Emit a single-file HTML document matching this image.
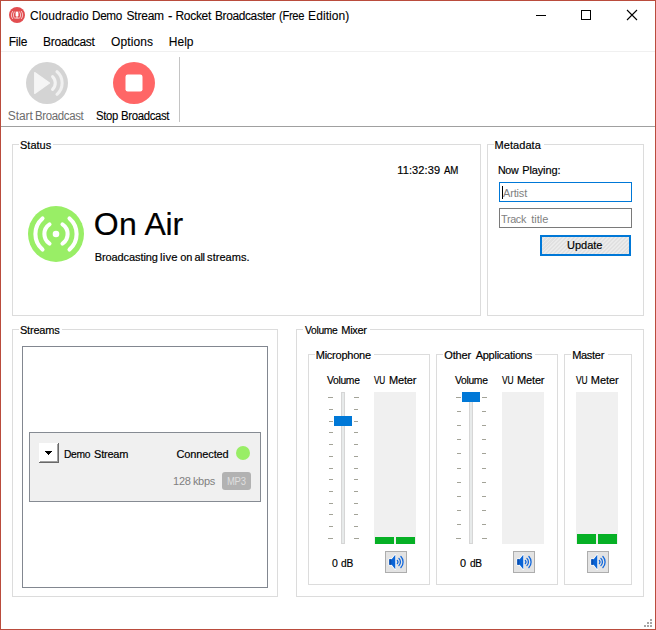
<!DOCTYPE html>
<html><head><meta charset="utf-8"><title>Rocket Broadcaster</title>
<style>
html,body{margin:0;padding:0;background:#fff;}
body{width:656px;height:630px;position:relative;overflow:hidden;font-family:"Liberation Sans", sans-serif;}
.p{position:absolute;left:0;margin:0;padding:0;white-space:pre;font-family:"Liberation Sans", sans-serif;}
.t{position:relative;display:inline-block;white-space:pre;}
.b{position:absolute;box-sizing:border-box;}
.gb{position:absolute;box-sizing:border-box;border:1px solid #dcdcdc;}
.lb{position:absolute;background:#fff;height:3px;}
svg{position:absolute;overflow:visible;}
</style></head><body>
<!-- window border -->
<div class="b" style="left:0;top:0;width:656px;height:630px;border:1px solid #ba4c3d;"></div>
<!-- title icon -->
<svg style="left:9px;top:7px" width="16" height="16" viewBox="0 0 16 16">
 <circle cx="8" cy="8" r="8" fill="#e24d50"/>
 <rect x="6.6" y="4.5" width="2.8" height="5.2" rx="1.4" fill="#fff"/>
 <rect x="6.3" y="10.6" width="3.4" height="0.9" fill="#fff" opacity="0.95"/>
 <rect x="7.6" y="9.6" width="0.8" height="1.2" fill="#fff" opacity="0.9"/>
 <g fill="none" stroke="#fff" stroke-width="0.9" opacity="0.75">
  <path d="M5.9 4.4A5 5 0 0 0 5.9 11.6M10.1 4.4A5 5 0 0 1 10.1 11.6"/>
  <path d="M3.9 4A6.5 6.5 0 0 0 3.9 12M12.1 4A6.5 6.5 0 0 1 12.1 12"/>
 </g>
</svg>
<!-- window controls -->
<svg style="left:530px;top:5px" width="120" height="20" viewBox="530 5 120 20" shape-rendering="crispEdges">
 <rect x="536" y="15" width="10" height="1" fill="#000"/>
 <rect x="581.5" y="10.5" width="9" height="9" fill="none" stroke="#000" stroke-width="1"/>
</svg>
<svg style="left:627px;top:10px" width="10" height="10" viewBox="0 0 10 10">
 <path d="M0 0L10 10M10 0L0 10" stroke="#000" stroke-width="1.1" fill="none"/>
</svg>
<!-- menu separator -->
<div class="b" style="left:1px;top:51px;width:654px;height:1px;background:#f0f0f0;"></div>
<!-- toolbar bottom line -->
<div class="b" style="left:1px;top:126px;width:654px;height:1px;background:#a0a0a0;"></div>
<!-- toolbar separator -->
<div class="b" style="left:179px;top:57px;width:1px;height:65px;background:#c4c4c4;"></div>
<!-- start broadcast icon -->
<svg style="left:26px;top:62px" width="42" height="42" viewBox="0 0 42 42">
 <circle cx="21" cy="21" r="21" fill="#d4d4d4"/>
 <path d="M8.7 10.6L23.5 21L8.7 31.4Z" fill="#f5f5f5" stroke="#f5f5f5" stroke-width="1.2" stroke-linejoin="round"/>
 <path d="M26.6 14.6a9 9 0 0 1 0 12.8" fill="none" stroke="#f3f3f3" stroke-width="3.1" stroke-linecap="round"/>
 <path d="M31 9.7a15 15 0 0 1 0 22.6" fill="none" stroke="#f1f1f1" stroke-width="3.1" stroke-linecap="round"/>
</svg>
<!-- stop broadcast icon -->
<svg style="left:113px;top:62px" width="42" height="42" viewBox="0 0 42 42">
 <circle cx="21" cy="21" r="21" fill="#ff6666"/>
 <rect x="12.5" y="12.5" width="17" height="17" rx="2.2" fill="#fff"/>
</svg>

<!-- group boxes -->
<div class="gb" style="left:12px;top:144px;width:469px;height:172px;"></div>
<div class="lb" style="left:19px;top:143px;width:34px;"></div>
<div class="gb" style="left:487px;top:144px;width:157px;height:172px;"></div>
<div class="lb" style="left:494px;top:143px;width:50px;"></div>
<div class="gb" style="left:12px;top:329px;width:266px;height:268px;"></div>
<div class="lb" style="left:19px;top:328px;width:43px;"></div>
<div class="gb" style="left:296px;top:329px;width:348px;height:268px;"></div>
<div class="lb" style="left:303px;top:328px;width:67px;"></div>
<div class="gb" style="left:308px;top:354px;width:122px;height:231px;"></div>
<div class="lb" style="left:315px;top:353px;width:59px;"></div>
<div class="gb" style="left:436px;top:354px;width:122px;height:231px;"></div>
<div class="lb" style="left:443px;top:353px;width:92px;"></div>
<div class="gb" style="left:564px;top:354px;width:68px;height:231px;"></div>
<div class="lb" style="left:571px;top:353px;width:37px;"></div>

<!-- On air icon -->
<svg style="left:28px;top:206px" width="56" height="56" viewBox="-28 -28 56 56">
 <circle cx="0" cy="0" r="28" fill="#99ee66"/>
 <circle cx="0" cy="0" r="3.3" fill="#fff"/>
 <g fill="none" stroke="#fff" stroke-width="4.1" stroke-linecap="round">
  <path d="M-6.49 -9.62A11.6 11.6 0 0 0 -6.49 9.62"/>
  <path d="M6.49 -9.62A11.6 11.6 0 0 1 6.49 9.62"/>
  <path d="M-13.51 -15.55A20.6 20.6 0 0 0 -13.51 15.55"/>
  <path d="M13.51 -15.55A20.6 20.6 0 0 1 13.51 15.55"/>
 </g>
</svg>

<!-- metadata inputs -->
<div class="b" style="left:499px;top:182px;width:133px;height:20px;border:1px solid #0078d7;background:#fff;"></div>
<div class="b" style="left:502px;top:186px;width:1px;height:13px;background:#000;"></div>
<div class="b" style="left:499px;top:208px;width:133px;height:20px;border:1px solid #7a7a7a;background:#fff;"></div>
<div class="b" style="left:540px;top:235px;width:91px;height:21px;border:2px solid #0078d7;background:#e1e1e1 repeating-linear-gradient(135deg,rgba(255,255,255,0) 0,rgba(255,255,255,0) 1.5px,rgba(255,255,255,.35) 1.5px,rgba(255,255,255,.35) 2.8px);"></div>

<!-- streams list -->
<div class="b" style="left:22px;top:346px;width:246px;height:242px;border:1px solid #828790;background:#fff;"></div>
<div class="b" style="left:29px;top:432px;width:232px;height:70px;border:1px solid #868b93;background:#f0f0f0;"></div>
<!-- dropdown button -->
<div class="b" style="left:39px;top:443px;width:20px;height:20px;background:#fff;border-right:1px solid #696969;border-bottom:1px solid #696969;"></div>
<div class="b" style="left:40px;top:444px;width:18px;height:18px;border-right:1px solid #a0a0a0;border-bottom:1px solid #a0a0a0;"></div>
<svg style="left:45px;top:451px" width="7" height="4" viewBox="0 0 7 4" shape-rendering="crispEdges"><path d="M0 0H7V1H6V2H5V3H4V4H3V3H2V2H1V1H0Z" fill="#000"/></svg>
<!-- connected dot -->
<div class="b" style="left:236px;top:446px;width:14px;height:14px;border-radius:7px;background:#99ee66;"></div>
<!-- mp3 badge -->
<div class="b" style="left:222px;top:472px;width:29px;height:18px;border-radius:3px;background:#b2b2b2;"></div>
<!-- mixer -->
<div class="b" style="left:341px;top:392px;width:4px;height:152px;border:1px solid #d6d6d6;background:#e7eaea;"></div>
<div class="b" style="left:328px;top:397px;width:5px;height:1px;background:#a3a398;"></div>
<div class="b" style="left:354px;top:397px;width:5px;height:1px;background:#a3a398;"></div>
<div class="b" style="left:329px;top:409px;width:4px;height:1px;background:#a3a398;"></div>
<div class="b" style="left:354px;top:409px;width:4px;height:1px;background:#a3a398;"></div>
<div class="b" style="left:329px;top:421px;width:4px;height:1px;background:#a3a398;"></div>
<div class="b" style="left:354px;top:421px;width:4px;height:1px;background:#a3a398;"></div>
<div class="b" style="left:329px;top:432px;width:4px;height:1px;background:#a3a398;"></div>
<div class="b" style="left:354px;top:432px;width:4px;height:1px;background:#a3a398;"></div>
<div class="b" style="left:329px;top:444px;width:4px;height:1px;background:#a3a398;"></div>
<div class="b" style="left:354px;top:444px;width:4px;height:1px;background:#a3a398;"></div>
<div class="b" style="left:329px;top:456px;width:4px;height:1px;background:#a3a398;"></div>
<div class="b" style="left:354px;top:456px;width:4px;height:1px;background:#a3a398;"></div>
<div class="b" style="left:329px;top:468px;width:4px;height:1px;background:#a3a398;"></div>
<div class="b" style="left:354px;top:468px;width:4px;height:1px;background:#a3a398;"></div>
<div class="b" style="left:329px;top:479px;width:4px;height:1px;background:#a3a398;"></div>
<div class="b" style="left:354px;top:479px;width:4px;height:1px;background:#a3a398;"></div>
<div class="b" style="left:329px;top:491px;width:4px;height:1px;background:#a3a398;"></div>
<div class="b" style="left:354px;top:491px;width:4px;height:1px;background:#a3a398;"></div>
<div class="b" style="left:329px;top:503px;width:4px;height:1px;background:#a3a398;"></div>
<div class="b" style="left:354px;top:503px;width:4px;height:1px;background:#a3a398;"></div>
<div class="b" style="left:329px;top:514px;width:4px;height:1px;background:#a3a398;"></div>
<div class="b" style="left:354px;top:514px;width:4px;height:1px;background:#a3a398;"></div>
<div class="b" style="left:329px;top:526px;width:4px;height:1px;background:#a3a398;"></div>
<div class="b" style="left:354px;top:526px;width:4px;height:1px;background:#a3a398;"></div>
<div class="b" style="left:328px;top:538px;width:5px;height:1px;background:#a3a398;"></div>
<div class="b" style="left:354px;top:538px;width:5px;height:1px;background:#a3a398;"></div>
<div class="b" style="left:334px;top:416px;width:18px;height:10px;background:#0078d7;"></div>
<div class="b" style="left:374px;top:392px;width:42px;height:152px;background:#f0f0f0;"></div>
<div class="b" style="left:375px;top:537px;width:19px;height:7px;background:#06b025;"></div>
<div class="b" style="left:396px;top:537px;width:19px;height:7px;background:#06b025;"></div>
<div class="b" style="left:385px;top:551px;width:22px;height:22px;border:1px solid #adadad;background:#e3e3e3;"></div>
<svg style="left:385px;top:551px" width="22" height="22" viewBox="0 0 22 22">
 <g transform="translate(0.7 0)"><path d="M3.6 8.2H6L9.6 3.8V18.2L6 13.8H3.6Z" fill="#0a64d6" stroke="#fff" stroke-width="1.6" stroke-linejoin="round" paint-order="stroke"/>
 <rect x="3.6" y="8.2" width="2" height="5.6" fill="#0a4fb0"/>
 <g fill="none" stroke="#1268dc" stroke-width="1.3" stroke-linecap="round">
  <path d="M11.7 9.5a2.2 2.2 0 0 1 0 3"/>
  <path d="M13.2 7.4a5 5 0 0 1 0 7.2"/>
  <path d="M15.2 5.5a8 8 0 0 1 0 11"/>
 </g></g>
</svg>
<div class="b" style="left:469px;top:392px;width:4px;height:152px;border:1px solid #d6d6d6;background:#e7eaea;"></div>
<div class="b" style="left:456px;top:397px;width:5px;height:1px;background:#a3a398;"></div>
<div class="b" style="left:482px;top:397px;width:5px;height:1px;background:#a3a398;"></div>
<div class="b" style="left:457px;top:411px;width:4px;height:1px;background:#a3a398;"></div>
<div class="b" style="left:482px;top:411px;width:4px;height:1px;background:#a3a398;"></div>
<div class="b" style="left:457px;top:425px;width:4px;height:1px;background:#a3a398;"></div>
<div class="b" style="left:482px;top:425px;width:4px;height:1px;background:#a3a398;"></div>
<div class="b" style="left:457px;top:439px;width:4px;height:1px;background:#a3a398;"></div>
<div class="b" style="left:482px;top:439px;width:4px;height:1px;background:#a3a398;"></div>
<div class="b" style="left:457px;top:453px;width:4px;height:1px;background:#a3a398;"></div>
<div class="b" style="left:482px;top:453px;width:4px;height:1px;background:#a3a398;"></div>
<div class="b" style="left:457px;top:468px;width:4px;height:1px;background:#a3a398;"></div>
<div class="b" style="left:482px;top:468px;width:4px;height:1px;background:#a3a398;"></div>
<div class="b" style="left:457px;top:482px;width:4px;height:1px;background:#a3a398;"></div>
<div class="b" style="left:482px;top:482px;width:4px;height:1px;background:#a3a398;"></div>
<div class="b" style="left:457px;top:496px;width:4px;height:1px;background:#a3a398;"></div>
<div class="b" style="left:482px;top:496px;width:4px;height:1px;background:#a3a398;"></div>
<div class="b" style="left:457px;top:510px;width:4px;height:1px;background:#a3a398;"></div>
<div class="b" style="left:482px;top:510px;width:4px;height:1px;background:#a3a398;"></div>
<div class="b" style="left:457px;top:524px;width:4px;height:1px;background:#a3a398;"></div>
<div class="b" style="left:482px;top:524px;width:4px;height:1px;background:#a3a398;"></div>
<div class="b" style="left:456px;top:538px;width:5px;height:1px;background:#a3a398;"></div>
<div class="b" style="left:482px;top:538px;width:5px;height:1px;background:#a3a398;"></div>
<div class="b" style="left:462px;top:392px;width:18px;height:10px;background:#0078d7;"></div>
<div class="b" style="left:502px;top:392px;width:42px;height:152px;background:#f0f0f0;"></div>
<div class="b" style="left:513px;top:551px;width:22px;height:22px;border:1px solid #adadad;background:#e3e3e3;"></div>
<svg style="left:513px;top:551px" width="22" height="22" viewBox="0 0 22 22">
 <g transform="translate(0.7 0)"><path d="M3.6 8.2H6L9.6 3.8V18.2L6 13.8H3.6Z" fill="#0a64d6" stroke="#fff" stroke-width="1.6" stroke-linejoin="round" paint-order="stroke"/>
 <rect x="3.6" y="8.2" width="2" height="5.6" fill="#0a4fb0"/>
 <g fill="none" stroke="#1268dc" stroke-width="1.3" stroke-linecap="round">
  <path d="M11.7 9.5a2.2 2.2 0 0 1 0 3"/>
  <path d="M13.2 7.4a5 5 0 0 1 0 7.2"/>
  <path d="M15.2 5.5a8 8 0 0 1 0 11"/>
 </g></g>
</svg>
<div class="b" style="left:576px;top:392px;width:42px;height:152px;background:#f0f0f0;"></div>
<div class="b" style="left:577px;top:534px;width:19px;height:10px;background:#06b025;"></div>
<div class="b" style="left:598px;top:534px;width:19px;height:10px;background:#06b025;"></div>
<div class="b" style="left:587px;top:551px;width:22px;height:22px;border:1px solid #adadad;background:#e3e3e3;"></div>
<svg style="left:587px;top:551px" width="22" height="22" viewBox="0 0 22 22">
 <g transform="translate(0.7 0)"><path d="M3.6 8.2H6L9.6 3.8V18.2L6 13.8H3.6Z" fill="#0a64d6" stroke="#fff" stroke-width="1.6" stroke-linejoin="round" paint-order="stroke"/>
 <rect x="3.6" y="8.2" width="2" height="5.6" fill="#0a4fb0"/>
 <g fill="none" stroke="#1268dc" stroke-width="1.3" stroke-linecap="round">
  <path d="M11.7 9.5a2.2 2.2 0 0 1 0 3"/>
  <path d="M13.2 7.4a5 5 0 0 1 0 7.2"/>
  <path d="M15.2 5.5a8 8 0 0 1 0 11"/>
 </g></g>
</svg>
<!-- grip -->
<div class="b" style="left:650px;top:619px;width:2px;height:2px;background:#a6a6a6;"></div>
<div class="b" style="left:647px;top:622px;width:2px;height:2px;background:#a6a6a6;"></div>
<div class="b" style="left:650px;top:622px;width:2px;height:2px;background:#a6a6a6;"></div>
<div class="b" style="left:644px;top:625px;width:2px;height:2px;background:#a6a6a6;"></div>
<div class="b" style="left:647px;top:625px;width:2px;height:2px;background:#a6a6a6;"></div>
<div class="b" style="left:650px;top:625px;width:2px;height:2px;background:#a6a6a6;"></div>

<div class="p" style="top:9.84px;font-size:12px;line-height:12px;color:#000;"><span class="t" id="w0" style="left:29.96px;letter-spacing:0.081px;-webkit-text-stroke:0.1px #000;">Cloudradio</span> <span class="t" id="w1" style="left:30.20px;letter-spacing:-0.360px;-webkit-text-stroke:0.1px #000;transform:scaleX(0.9797);transform-origin:0 0;">Demo</span> <span class="t" id="w2" style="left:30.48px;letter-spacing:-0.244px;-webkit-text-stroke:0.1px #000;">Stream</span> <span class="t" id="w3" style="left:31.33px;letter-spacing:0.000px;-webkit-text-stroke:0.1px #000;transform:scaleX(1.1020);transform-origin:0 0;">-</span> <span class="t" id="w4" style="left:31.47px;letter-spacing:-0.312px;-webkit-text-stroke:0.1px #000;">Rocket</span> <span class="t" id="w5" style="left:32.10px;letter-spacing:-0.360px;-webkit-text-stroke:0.1px #000;transform:scaleX(0.9933);transform-origin:0 0;">Broadcaster</span> <span class="t" id="w6" style="left:32.22px;letter-spacing:-0.360px;-webkit-text-stroke:0.1px #000;transform:scaleX(0.9335);transform-origin:0 0;">(Free</span> <span class="t" id="w7" style="left:30.92px;letter-spacing:0.076px;-webkit-text-stroke:0.1px #000;">Edition)</span></div>
<div class="p" style="top:35.84px;font-size:12px;line-height:12px;color:#000;"><span class="t" id="w8" style="left:8.71px;letter-spacing:-0.192px;-webkit-text-stroke:0.1px #000;">File</span></div>
<div class="p" style="top:35.84px;font-size:12px;line-height:12px;color:#000;"><span class="t" id="w9" style="left:43.10px;letter-spacing:-0.280px;-webkit-text-stroke:0.1px #000;">Broadcast</span></div>
<div class="p" style="top:35.84px;font-size:12px;line-height:12px;color:#000;"><span class="t" id="w10" style="left:111.07px;letter-spacing:0.090px;-webkit-text-stroke:0.1px #000;">Options</span></div>
<div class="p" style="top:35.84px;font-size:12px;line-height:12px;color:#000;"><span class="t" id="w11" style="left:168.84px;letter-spacing:0.009px;-webkit-text-stroke:0.1px #000;">Help</span></div>
<div class="p" style="top:109.84px;font-size:12px;line-height:12px;color:#6d6d6d;"><span class="t" id="w12" style="left:7.74px;letter-spacing:-0.086px;">Start</span> <span class="t" id="w13" style="left:6.98px;letter-spacing:-0.360px;transform:scaleX(0.9539);transform-origin:0 0;">Broadcast</span></div>
<div class="p" style="top:109.84px;font-size:12px;line-height:12px;color:#000;"><span class="t" id="w14" style="left:95.89px;letter-spacing:-0.360px;-webkit-text-stroke:0.1px #000;transform:scaleX(0.9395);transform-origin:0 0;">Stop</span> <span class="t" id="w15" style="left:94.29px;letter-spacing:-0.360px;-webkit-text-stroke:0.1px #000;transform:scaleX(0.9487);transform-origin:0 0;">Broadcast</span></div>
<div class="p" style="top:139.69px;font-size:11px;line-height:11px;color:#000;"><span class="t" id="w16" style="left:19.94px;letter-spacing:0.023px;-webkit-text-stroke:0.18px #000;">Status</span></div>
<div class="p" style="top:139.69px;font-size:11px;line-height:11px;color:#000;"><span class="t" id="w17" style="left:494.59px;letter-spacing:0.050px;-webkit-text-stroke:0.18px #000;">Metadata</span></div>
<div class="p" style="top:324.69px;font-size:11px;line-height:11px;color:#000;"><span class="t" id="w18" style="left:19.94px;letter-spacing:-0.191px;-webkit-text-stroke:0.18px #000;">Streams</span></div>
<div class="p" style="top:324.69px;font-size:11px;line-height:11px;color:#000;"><span class="t" id="w19" style="left:304.69px;letter-spacing:-0.330px;-webkit-text-stroke:0.18px #000;transform:scaleX(0.9373);transform-origin:0 0;">Volume</span> <span class="t" id="w20" style="left:303.54px;letter-spacing:-0.293px;-webkit-text-stroke:0.18px #000;">Mixer</span></div>
<div class="p" style="top:349.69px;font-size:11px;line-height:11px;color:#000;"><span class="t" id="w21" style="left:315.71px;letter-spacing:-0.236px;-webkit-text-stroke:0.18px #000;">Microphone</span></div>
<div class="p" style="top:349.69px;font-size:11px;line-height:11px;color:#000;"><span class="t" id="w22" style="left:444.36px;letter-spacing:-0.193px;-webkit-text-stroke:0.18px #000;">Other</span> <span class="t" id="w23" style="left:446.09px;letter-spacing:-0.260px;-webkit-text-stroke:0.18px #000;">Applications</span></div>
<div class="p" style="top:349.69px;font-size:11px;line-height:11px;color:#000;"><span class="t" id="w24" style="left:572.14px;letter-spacing:-0.284px;-webkit-text-stroke:0.18px #000;">Master</span></div>
<div class="p" style="top:164.69px;font-size:11px;line-height:11px;color:#000;"><span class="t" id="w25" style="left:397.30px;letter-spacing:0.115px;-webkit-text-stroke:0.18px #000;">11:32:39</span> <span class="t" id="w26" style="left:397.57px;letter-spacing:-0.330px;-webkit-text-stroke:0.18px #000;transform:scaleX(0.8818);transform-origin:0 0;">AM</span></div>
<div class="p" style="top:164.69px;font-size:11px;line-height:11px;color:#000;"><span class="t" id="w27" style="left:498.38px;letter-spacing:-0.330px;-webkit-text-stroke:0.18px #000;transform:scaleX(0.9681);transform-origin:0 0;">Now</span> <span class="t" id="w28" style="left:498.09px;letter-spacing:-0.112px;-webkit-text-stroke:0.18px #000;">Playing:</span></div>
<div class="p" style="top:187.69px;font-size:11px;line-height:11px;color:#7f7f7f;"><span class="t" id="w29" style="left:502.99px;letter-spacing:-0.158px;">Artist</span></div>
<div class="p" style="top:213.69px;font-size:11px;line-height:11px;color:#7f7f7f;"><span class="t" id="w30" style="left:500.91px;letter-spacing:-0.330px;transform:scaleX(0.9849);transform-origin:0 0;">Track</span> <span class="t" id="w31" style="left:502.63px;letter-spacing:0.042px;">title</span></div>
<div class="p" style="top:240.19px;font-size:11px;line-height:11px;color:#000;"><span class="t" id="w32" style="left:567.12px;letter-spacing:-0.027px;-webkit-text-stroke:0.18px #000;">Update</span></div>
<div class="p" style="top:207.91px;font-size:32px;line-height:32px;color:#000;"><span class="t" id="w33" style="left:93.71px;letter-spacing:0.455px;-webkit-text-stroke:0.18px #000;">On</span> <span class="t" id="w34" style="left:91.88px;letter-spacing:-0.194px;-webkit-text-stroke:0.18px #000;">Air</span></div>
<div class="p" style="top:251.69px;font-size:11px;line-height:11px;color:#000;"><span class="t" id="w35" style="left:94.71px;letter-spacing:-0.090px;-webkit-text-stroke:0.18px #000;">Broadcasting</span> <span class="t" id="w36" style="left:93.99px;letter-spacing:0.220px;-webkit-text-stroke:0.18px #000;transform:scaleX(1.0215);transform-origin:0 0;">live</span> <span class="t" id="w37" style="left:93.60px;letter-spacing:-0.116px;-webkit-text-stroke:0.18px #000;">on</span> <span class="t" id="w38" style="left:92.88px;letter-spacing:-0.329px;-webkit-text-stroke:0.18px #000;">all</span> <span class="t" id="w39" style="left:92.29px;letter-spacing:0.031px;-webkit-text-stroke:0.18px #000;">streams.</span></div>
<div class="p" style="top:448.69px;font-size:11px;line-height:11px;color:#000;"><span class="t" id="w40" style="left:64.07px;letter-spacing:-0.330px;-webkit-text-stroke:0.18px #000;transform:scaleX(0.9350);transform-origin:0 0;">Demo</span> <span class="t" id="w41" style="left:62.95px;letter-spacing:-0.236px;-webkit-text-stroke:0.18px #000;">Stream</span></div>
<div class="p" style="top:448.69px;font-size:11px;line-height:11px;color:#000;"><span class="t" id="w42" style="left:176.47px;letter-spacing:-0.126px;-webkit-text-stroke:0.18px #000;">Connected</span></div>
<div class="p" style="top:475.69px;font-size:11px;line-height:11px;color:#808080;"><span class="t" id="w43" style="left:173.00px;letter-spacing:-0.235px;">128</span> <span class="t" id="w44" style="left:172.19px;letter-spacing:-0.300px;">kbps</span></div>
<div class="p" style="top:476.54px;font-size:10px;line-height:10px;color:#dfdfdf;"><span class="t" id="w45" style="left:226.96px;letter-spacing:-0.300px;transform:scaleX(0.9475);transform-origin:0 0;">MP3</span></div>
<div class="p" style="top:374.69px;font-size:11px;line-height:11px;color:#000;"><span class="t" id="w46" style="left:327.25px;letter-spacing:-0.330px;-webkit-text-stroke:0.18px #000;transform:scaleX(0.9385);transform-origin:0 0;">Volume</span></div>
<div class="p" style="top:374.69px;font-size:11px;line-height:11px;color:#000;"><span class="t" id="w47" style="left:374.22px;letter-spacing:-0.330px;-webkit-text-stroke:0.18px #000;transform:scaleX(0.7463);transform-origin:0 0;">VU</span> <span class="t" id="w48" style="left:371.26px;letter-spacing:-0.162px;-webkit-text-stroke:0.18px #000;">Meter</span></div>
<div class="p" style="top:374.69px;font-size:11px;line-height:11px;color:#000;"><span class="t" id="w49" style="left:455.25px;letter-spacing:-0.330px;-webkit-text-stroke:0.18px #000;transform:scaleX(0.9385);transform-origin:0 0;">Volume</span></div>
<div class="p" style="top:374.69px;font-size:11px;line-height:11px;color:#000;"><span class="t" id="w50" style="left:502.42px;letter-spacing:-0.330px;-webkit-text-stroke:0.18px #000;transform:scaleX(0.7703);transform-origin:0 0;">VU</span> <span class="t" id="w51" style="left:499.29px;letter-spacing:-0.141px;-webkit-text-stroke:0.18px #000;">Meter</span></div>
<div class="p" style="top:374.69px;font-size:11px;line-height:11px;color:#000;"><span class="t" id="w52" style="left:576.42px;letter-spacing:-0.330px;-webkit-text-stroke:0.18px #000;transform:scaleX(0.7703);transform-origin:0 0;">VU</span> <span class="t" id="w53" style="left:573.11px;letter-spacing:-0.035px;-webkit-text-stroke:0.18px #000;">Meter</span></div>
<div class="p" style="top:557.69px;font-size:11px;line-height:11px;color:#000;"><span class="t" id="w54" style="left:332.42px;letter-spacing:0.000px;-webkit-text-stroke:0.18px #000;transform:scaleX(0.9502);transform-origin:0 0;">0</span> <span class="t" id="w55" style="left:331.93px;letter-spacing:-0.330px;-webkit-text-stroke:0.18px #000;transform:scaleX(0.9291);transform-origin:0 0;">dB</span></div>
<div class="p" style="top:557.69px;font-size:11px;line-height:11px;color:#000;"><span class="t" id="w56" style="left:460.24px;letter-spacing:0.000px;-webkit-text-stroke:0.18px #000;transform:scaleX(0.9912);transform-origin:0 0;">0</span> <span class="t" id="w57" style="left:460.37px;letter-spacing:-0.330px;-webkit-text-stroke:0.18px #000;transform:scaleX(0.9205);transform-origin:0 0;">dB</span></div>
</body></html>
